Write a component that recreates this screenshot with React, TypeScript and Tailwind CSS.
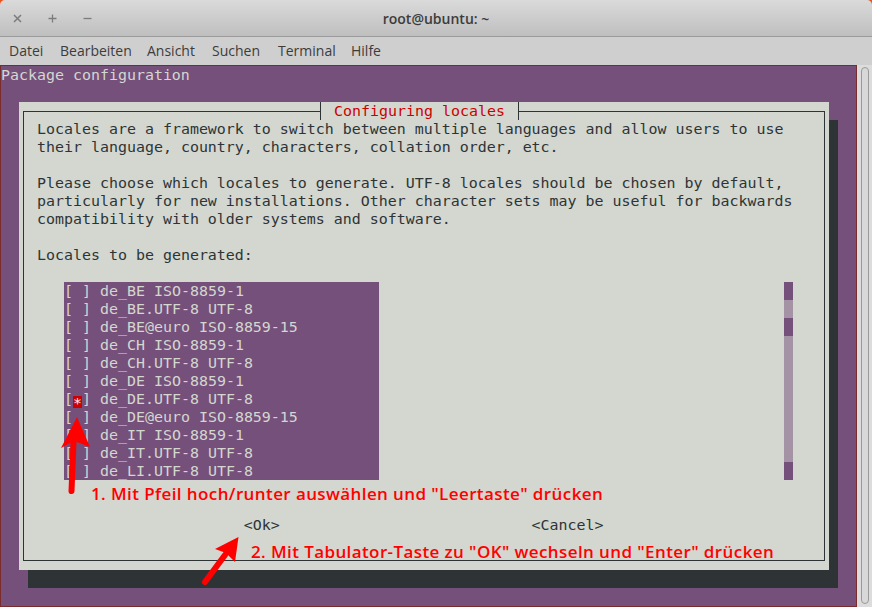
import React from "react";

const P = "bg-[#75507b]";

function Row({ children }: { children?: React.ReactNode }) {
  return <div className="h-[18px] whitespace-pre">{children ?? " "}</div>;
}

const items = [
  "de_BE ISO-8859-1",
  "de_BE.UTF-8 UTF-8",
  "de_BE@euro ISO-8859-15",
  "de_CH ISO-8859-1",
  "de_CH.UTF-8 UTF-8",
  "de_DE ISO-8859-1",
  "de_DE.UTF-8 UTF-8",
  "de_DE@euro ISO-8859-15",
  "de_IT ISO-8859-1",
  "de_IT.UTF-8 UTF-8",
  "de_LI.UTF-8 UTF-8",
];

const sb = ["d", "l", "d", "l", "l", "l", "l", "l", "l", "l", "d"];

export default function App() {
  return (
    <div className="w-[872px] h-[607px] overflow-hidden bg-[#e95420] relative">
      {/* title bar */}
      <div className="h-[37px] rounded-t-[5px] bg-gradient-to-b from-[#dadada] to-[#bfbfbf] border-b border-[#9a9a9a] flex items-center relative font-['Open_Sans',sans-serif]">
        <div className="flex items-center pl-[13px] gap-[26px]">
          <svg width="9" height="9" viewBox="0 0 9 9">
            <path d="M1 1L8 8M8 1L1 8" stroke="#7c7c7c" strokeWidth="1.5" />
          </svg>
          <svg width="9" height="9" viewBox="0 0 9 9">
            <path d="M4.5 0.5V8.5M0.5 4.5H8.5" stroke="#7c7c7c" strokeWidth="1.3" />
          </svg>
          <svg width="9" height="9" viewBox="0 0 9 9">
            <path d="M0.5 4.5H8.5" stroke="#7c7c7c" strokeWidth="1.3" />
          </svg>
        </div>
        <div className="absolute left-0 right-0 top-0 h-[36px] flex items-center justify-center text-[14px] font-semibold text-[#3c3c3c]">
          root@ubuntu: ~
        </div>
      </div>
      {/* menu bar */}
      <div className="h-[28px] bg-[#cfcfcf] flex items-center pl-[9px] pb-[1px] text-[14px] text-[#3c3c3c] font-['Open_Sans',sans-serif]">
        <span className="w-[51px]">Datei</span>
        <span className="w-[87px]">Bearbeiten</span>
        <span className="w-[65px]">Ansicht</span>
        <span className="w-[66px]">Suchen</span>
        <span className="w-[73px]">Terminal</span>
        <span>Hilfe</span>
      </div>
      {/* terminal + scrollbar */}
      <div className="flex h-[542px]">
        <div
          className={`w-[857px] h-[542px] ${P} border border-[#7a2c2c] text-[#d3d7cf] font-['DejaVu_Sans_Mono',monospace] text-[14.95px] leading-[18px]`}
        >
          <Row>Package configuration</Row>
          <Row />
          <div className="ml-[18px] w-[810px] h-[468px] bg-[#d3d7cf] shadow-[9px_18px_0_0_#2e3436] relative pt-[9px] px-[4px] pb-[9px] text-[#2e3436]">
            <div className="h-full border border-[#2e3436] pt-[8px] pl-[13px]">
              <Row>Locales are a framework to switch between multiple languages and allow users to use</Row>
              <Row>their language, country, characters, collation order, etc.</Row>
              <Row />
              <Row>Please choose which locales to generate. UTF-8 locales should be chosen by default,</Row>
              <Row>particularly for new installations. Other character sets may be useful for backwards</Row>
              <Row>compatibility with older systems and software.</Row>
              <Row />
              <Row>Locales to be generated:</Row>
              <Row />
              <div className="flex h-[198px]">
                <div className={`ml-[27px] w-[315px] ${P} text-[#d3d7cf]`}>
                  {items.map((it, i) => (
                    <div key={it} className="h-[18px] whitespace-pre flex">
                      <span>[</span>
                      {i === 6 ? (
                        <span className="w-[9px] h-[18px] flex flex-col justify-end">
                          <span className="h-[12px] bg-[#cc0000] text-[#eeeeec] leading-[12px] flex items-start justify-center pt-[1px]">*</span>
                        </span>
                      ) : (
                        <span> </span>
                      )}
                      <span>{"] " + it}</span>
                    </div>
                  ))}
                </div>
                <div className="ml-[405px] w-[9px] flex flex-col">
                  {sb.map((c, i) => (
                    <div key={i} className={`h-[18px] ${c === "d" ? "bg-[#75507b]" : "bg-[#a493a5]"}`} />
                  ))}
                </div>
              </div>
              <Row />
              <Row />
              <Row>{" ".repeat(23) + "<Ok>" + " ".repeat(28) + "<Cancel>"}</Row>
              <Row />
            </div>
            <div className="absolute top-0 left-[301px] h-[18px] w-[199px] border-x border-[#2e3436] bg-[#d3d7cf] pl-[13px] text-[#cc0000] whitespace-pre">
              Configuring locales
            </div>
          </div>
        </div>
        <div className="w-[15px] h-[542px] bg-[#dcdcdc] pl-[4px] pr-[3px] pt-[2px] pb-[3px]">
          <div className="h-full rounded-full border border-[#9a9a9a] bg-[#d8d8d8]" />
        </div>
      </div>

      {/* annotations */}
      <div className="absolute left-[91px] top-[483px] leading-[21px] text-[17px] tracking-[0.4px] font-semibold text-[#ff0000] font-['Open_Sans',sans-serif] whitespace-pre">
        1. Mit Pfeil hoch/runter auswählen und "Leertaste" drücken
      </div>
      <div className="absolute left-[251px] top-[541px] leading-[21px] text-[17px] tracking-[0.4px] font-semibold text-[#ff0000] font-['Open_Sans',sans-serif] whitespace-pre">
        2. Mit Tabulator-Taste zu "OK" wechseln und "Enter" drücken
      </div>
      <svg className="absolute left-0 top-0 pointer-events-none" width="872" height="607">
        <path d="M71.5 491L73.5 442" stroke="#ff0000" strokeWidth="6" strokeLinecap="round" />
        <path d="M77 417L90 447L74 441L61 448Z" fill="#ff0000" />
        <path d="M205 582L225 555" stroke="#ff0000" strokeWidth="6" strokeLinecap="round" />
        <path d="M238.5 537L235 562L226 553L215 549Z" fill="#ff0000" />
      </svg>
    </div>
  );
}
